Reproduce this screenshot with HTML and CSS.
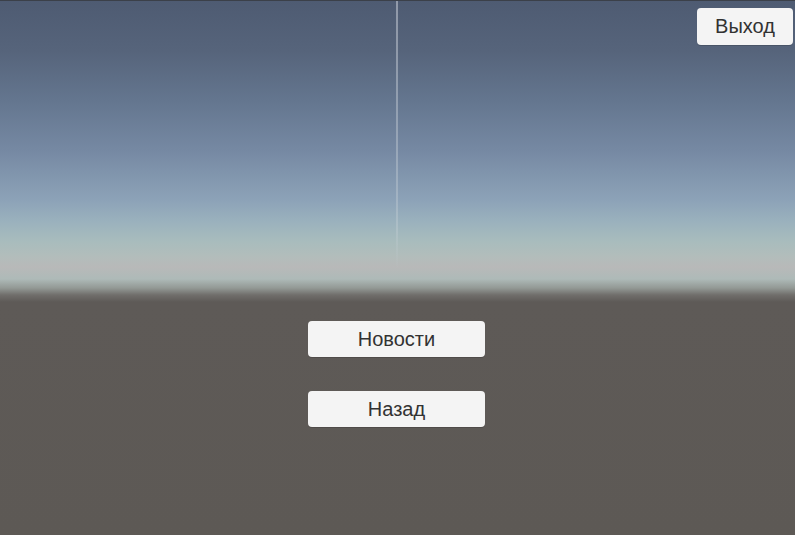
FILE: index.html
```html
<!DOCTYPE html>
<html lang="ru">
<head>
<meta charset="utf-8">
<title>Меню</title>
<link rel="stylesheet" href="styles.css">
</head>
<body>
<div class="scene">
  <div class="ray"></div>
  <div class="topbar">
    <button class="btn btn-exit">Выход</button>
  </div>
  <div class="menu">
    <button class="btn btn-menu">Новости</button>
    <button class="btn btn-menu">Назад</button>
  </div>
</div>
</body>
</html>
```
FILE: styles.css
```css
html, body {
  margin: 0;
  padding: 0;
  background: #5d5955;
}
.scene {
  position: relative;
  width: 795px;
  height: 535px;
  overflow: hidden;
  display: flex;
  flex-direction: column;
  border-top: 1px solid #3b4049;
  box-sizing: border-box;
  background: linear-gradient(to bottom,
    #4e5b72 0px,
    #56647b 50px,
    #64768f 100px,
    #7689a3 150px,
    #8da3b8 200px,
    #9ab1bd 220px,
    #a8bcbd 240px,
    #b2bdbb 255px,
    #b8b9b9 266px,
    #aebab8 278px,
    #939995 287px,
    #706e6b 294px,
    #5e5a57 301px,
    #5d5955 535px);
}
.ray {
  position: absolute;
  left: 396px;
  top: 0;
  width: 2px;
  height: 268px;
  background: linear-gradient(to bottom, rgba(200,205,215,0.55), rgba(200,210,215,0.35) 85%, rgba(200,210,215,0));
}
.topbar {
  display: flex;
  justify-content: flex-end;
  padding: 7px 2px 0 0;
}
.btn {
  font-family: "Liberation Sans", Arial, sans-serif;
  font-size: 20px;
  color: #323232;
  background: #f4f4f4;
  border: none;
  border-radius: 4px;
  padding: 0;
  cursor: pointer;
  box-shadow: 0 1px 0 rgba(0,0,0,0.15);
}
.btn-exit {
  width: 96px;
  height: 37px;
}
.menu {
  display: flex;
  flex-direction: column;
  align-items: center;
  gap: 34px;
  margin-top: 276px;
  padding-right: 2px;
}
.btn-menu {
  width: 177px;
  height: 36px;
}
```
